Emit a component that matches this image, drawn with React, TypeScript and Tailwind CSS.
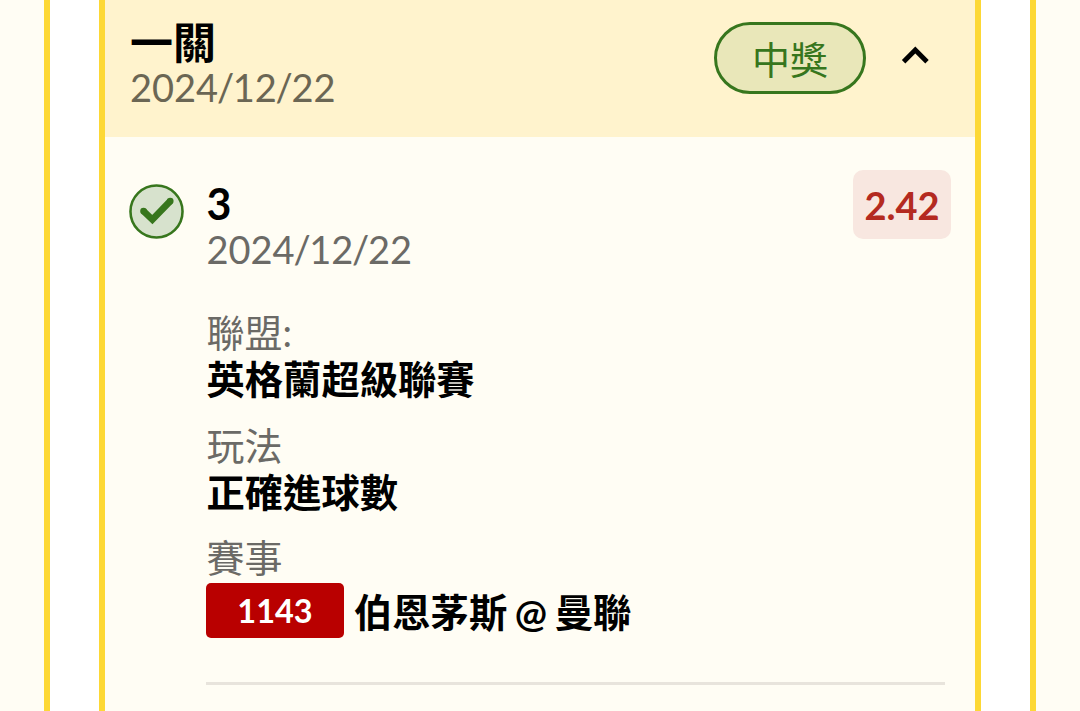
import clsx from 'clsx'
import React from 'react'

const cjk = "font-[Lato,'Noto_Sans_CJK_TC',sans-serif]"

function CheckBadge() {
  return (
    <svg className="h-[55px] w-[55px] shrink-0" viewBox="0 0 56 56" fill="none">
      <circle cx="28" cy="28" r="26.5" fill="#d7e2cd" stroke="#37761d" strokeWidth="2.6" />
      <path d="M14.8 27.6 L23.8 36.2 L42 17.4" stroke="#37761d" strokeWidth="6.8" />
      <circle cx="14.8" cy="27.6" r="3.4" fill="#37761d" />
      <circle cx="42" cy="17.4" r="3.4" fill="#37761d" />
    </svg>
  )
}

function DateText({ value }: { value: string }) {
  const [year, month, day] = value.split('/')
  return (
    <>
      {year}
      <span className="-mx-[1.3px]">/</span>
      {month}
      <span className="-mx-[1.3px]">/</span>
      {day}
    </>
  )
}

function Field({ label, children }: { label: string; children: React.ReactNode }) {
  return (
    <div className="h-[112.5px]">
      <div className="h-[46px] text-[38px] leading-[46px] text-[#6b6a66]">{label}</div>
      <div className="flex h-[48px] items-center text-[38.3px] leading-[48px] font-bold text-black">{children}</div>
    </div>
  )
}

export default function App() {
  return (
    <div className={clsx('flex h-[711px] w-[1080px] overflow-hidden bg-[#fffdf4] whitespace-nowrap', cjk)}>
      <div className="ml-11 w-[992px] border-x-6 border-[#fdd835] bg-white px-[49px]">
        <div className="h-full border-x-6 border-[#fdd835] bg-[#fffdf4]">
          <header className="flex h-[137px] justify-between bg-[#fff3cd] pr-[46px] pl-[25px]">
            <div className="pt-[20px]">
              <div className="h-[45px] text-[43px] leading-[45px] font-bold">一關</div>
              <div className="h-[46px] text-[38px] leading-[45px] text-[#6b6654]">
                <DateText value="2024/12/22" />
              </div>
            </div>
            <div className="flex items-start pt-[22px]">
              <div className="flex h-[72px] w-[152px] items-center justify-center rounded-full border-3 border-[#37761d] bg-[#e9e7b9] pt-[2px] text-[38px] text-[#37761d]">
                中獎
              </div>
              <svg className="mt-[22px] ml-[35px] h-[22px] w-[28px]" viewBox="0 0 28 22" fill="none">
                <path d="M2.6 17.8 L14.3 6 L26 17.8" stroke="#000" strokeWidth="4.8" />
              </svg>
            </div>
          </header>

          <main className="flex pr-[24px] pl-[24px]">
            <div className="pt-[47px]">
              <CheckBadge />
            </div>
            <div className="ml-[22px] flex-1">
              <div className="flex justify-between">
                <div className="pt-[44px] pl-[0.5px]">
                  <div className="h-[46px] text-[43px] leading-[46px] font-bold">3</div>
                  <div className="h-[46px] text-[38px] leading-[45px] text-[#6b6a66]">
                    <DateText value="2024/12/22" />
                  </div>
                </div>
                <div className="mt-[33px] flex h-[69px] w-[98px] items-center justify-center rounded-[10px] bg-[#f8e7e0] pt-[2px] text-[38px] font-bold text-[#b42a20]">
                  2.42
                </div>
              </div>

              <div className="mt-[36px] pl-[0.5px]">
                <Field label="聯盟:">英格蘭超級聯賽</Field>
                <Field label="玩法">正確進球數</Field>
                <Field label="賽事">
                  <span className="mt-[12px] mr-[10px] -ml-[0.5px] flex h-[55px] w-[138px] items-center justify-center rounded-[5px] bg-[#b90000] pt-[2px] text-[32.5px] text-white">
                    1143
                  </span>
                  <span className="mt-[15px] [word-spacing:-1.7px]">伯恩茅斯 @ 曼聯</span>
                </Field>
              </div>
              <div className="mt-[35px] mr-[6px] h-[3px] bg-[#e8e4dc]" />
            </div>
          </main>
        </div>
      </div>
    </div>
  )
}
